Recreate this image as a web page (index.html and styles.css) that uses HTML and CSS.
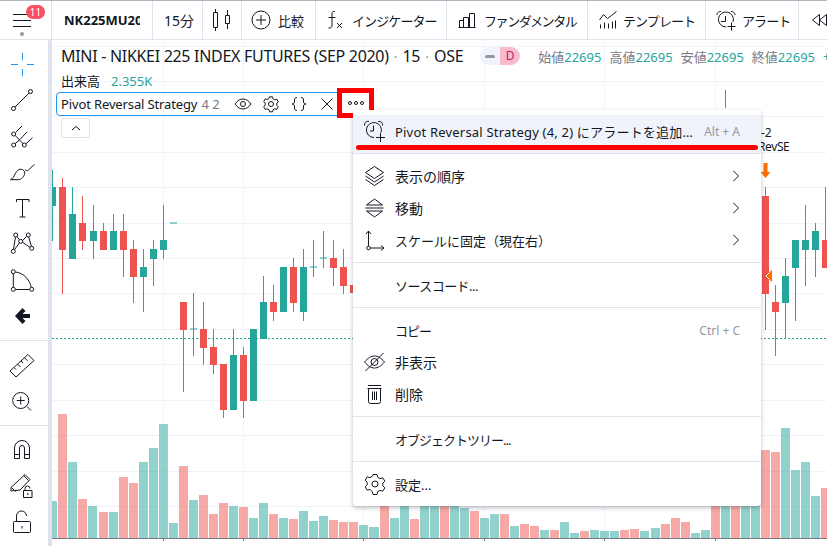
FILE: index.html
```html
<!DOCTYPE html>
<html lang="ja">
<head>
    <meta charset="UTF-8">
    <title>NK225MU2020 - Chart</title>
    <link rel="stylesheet" href="styles.css">
</head>
<body>
    <div class="app">
        <!-- Top toolbar -->
        <header class="topbar">
            <div class="cell cell-menu">
                <svg class="ico" width="28" height="28" viewBox="0 0 28 28"><path d="M5 8.500h14M5 14.500h18M5 20.500h18"/></svg>
                <span class="menu-dot"></span>
                <span class="badge">11</span>
            </div>
            <div class="cell cell-symbol"><span class="symbol">NK225MU2020</span></div>
            <div class="cell cell-interval">15分</div>
            <div class="cell cell-style">
                <svg class="ico" width="28" height="28" viewBox="0 0 28 28"><path d="M7.500 3v3M7.500 22v3M5.500 6.500h4v15h-4zM19.500 4v5M19.500 18v5M17.500 9.500h4v8h-4z"/></svg>
            </div>
            <div class="cell cell-compare">
                <svg class="ico" width="20" height="20" viewBox="0 0 20 20"><circle cx="10" cy="10" r="9"/><path d="M10 5v10M5 10h10"/></svg>
                <span>比較</span>
            </div>
            <div class="cell cell-indicator">
                <svg class="ico" width="18" height="20" viewBox="0 0 18 20"><path d="M9 1.500c-2-.5-3 .5-3 2.500v11c0 2-1 3.500-3.500 3M2.500 7.500h7M11 13l5 5M16 13l-5 5"/></svg>
                <span class="kana">インジケーター</span>
            </div>
            <div class="cell cell-fund">
                <svg class="ico" width="18" height="16" viewBox="0 0 18 16"><path d="M.5 15.500h17M1.500 15.500v-7h4v7M5.500 15.500v-10h5v10M11.500 15.500V1.500h5v14"/></svg>
                <span class="kana kana-fund">ファンダメンタル</span>
            </div>
            <div class="cell cell-template">
                <svg class="ico" width="18" height="18" viewBox="0 0 18 18"><path d="M.5 9l4-5.500 4 4 4-3 5-4M1.500 17.500v-4M5.500 17.500v-6M9.500 17.500v-5M13.500 17.500v-7M16.500 17.500v-8"/></svg>
                <span class="kana">テンプレート</span>
            </div>
            <div class="cell cell-alert">
                <svg class="ico" width="20" height="21" viewBox="0 0 20 21"><path d="M10 17a7.500 7.500 0 1 1 7-5M9.500 6v5.500H5M1 5a3.500 3.500 0 0 1 4-3.500M19 5a3.500 3.500 0 0 0-4-3.500M15.500 12.500v8M11.500 16.500h8"/></svg>
                <span class="kana">アラート</span>
            </div>
            <div class="cell cell-replay">
                <svg class="ico" width="28" height="12" viewBox="0 0 28 12"><path d="M7.500 .5L.5 6l7 5.500zM14.500 .5L7.500 6l7 5.500zM21.500 .5L14.500 6l7 5.500z"/></svg>
            </div>
        </header>

        <div class="main">
            <!-- Drawing tools -->
            <aside class="sidebar">
                <div class="tool-group">
                    <div class="tool"><svg class="ico ico-active" width="28" height="28" viewBox="0 0 28 28"><path d="M3 14.500h7M19 14.500h7M14.500 3v7M14.500 19v7"/></svg></div>
                    <div class="tool"><svg class="ico" width="28" height="28" viewBox="0 0 28 28"><circle cx="5.500" cy="22.500" r="2"/><circle cx="22.500" cy="5.500" r="2"/><path d="M7 21L21 7"/></svg></div>
                    <div class="tool"><svg class="ico" width="28" height="28" viewBox="0 0 28 28"><circle cx="5.700" cy="12" r="2"/><circle cx="5.700" cy="23" r="2"/><circle cx="16.300" cy="23" r="2"/><path d="M7.200 13.500l7.700 8M7.200 21.700l5-4.500 7-7.500M8 10l6-6M18 21.700l6.500-6"/></svg></div>
                    <div class="tool"><svg class="ico" width="28" height="28" viewBox="0 0 28 28"><path d="M2.500 21.700c2.500-1 3.500-3.500 5-6.500 1.500-2.500 3-4.200 5.500-4 2.500.3 4 2 3.700 4-.5 3.500-3.200 6.500-6.700 6.500zM17.500 11.500c0 1.500 2 1.500 3 .5l6-5.700"/></svg></div>
                    <div class="tool"><svg class="ico" width="28" height="28" viewBox="0 0 28 28"><path d="M8.500 8V5.500h12.500V8M14.500 5.500v17.500M11.500 23h6"/></svg></div>
                    <div class="tool"><svg class="ico" width="28" height="28" viewBox="0 0 28 28"><circle cx="7.700" cy="5" r="2"/><circle cx="20.300" cy="5" r="2"/><circle cx="12.700" cy="11.300" r="2"/><circle cx="5.300" cy="21.300" r="2"/><circle cx="23.700" cy="18.300" r="2"/><path d="M5.500 19.300L7.500 7M9 6.600l2.500 3.200M11.400 12.800L6.500 19.700M14.600 10.600L18.700 6.200M20.700 7l2.700 9.300M14.500 12.200l7.400 5.200"/></svg></div>
                    <div class="tool"><svg class="ico" width="28" height="28" viewBox="0 0 28 28"><circle cx="5.300" cy="5.700" r="2"/><circle cx="5.300" cy="23.300" r="2"/><circle cx="23.700" cy="23.300" r="2"/><path d="M5.300 7.700v13.600M7.300 23.500h14.400M7.300 6c8 .8 14 7 16 15.300"/></svg></div>
                    <div class="tool"><svg class="ico-fill" width="28" height="28" viewBox="0 0 28 28"><path d="M14.500 6L7 14l7.500 8 3-3-3-3H22v-4h-7.500l3-3z"/></svg></div>
                </div>
                <div class="tool-group">
                    <div class="tool"><svg class="ico" width="28" height="28" viewBox="0 0 28 28"><path d="M2 20L20 3.500l6 6L8 26zM6 16.500l2 2M9.500 13l3 3M13 10l2 2M16.500 6.800l3 3"/></svg></div>
                    <div class="tool"><svg class="ico" width="28" height="28" viewBox="0 0 28 28"><circle cx="12.700" cy="13.500" r="8"/><path d="M12.700 9.500v8M8.700 13.500h8M19 19.500l4 4"/></svg></div>
                </div>
                <div class="tool-group">
                    <div class="tool"><svg class="ico" width="28" height="28" viewBox="0 0 28 28"><path d="M6.500 22.500V12a7.500 7.500 0 0 1 15 0v10.500h-5V12a2.500 2.500 0 0 0-5 0v10.500zM6.500 18.500h5M16.500 18.500h5"/></svg></div>
                    <div class="tool"><svg class="ico" width="28" height="28" viewBox="0 0 28 28"><path d="M3 15.500L17 2.500l5 5-10 10.500-9 1zM3.500 15.500l4 4M16 4l4.500 4.500M15.500 25.500h8.500v-7h-8.500zM17 18.500v-2a2.500 2.500 0 0 1 5 0M19.800 21v2"/></svg></div>
                    <div class="tool"><svg class="ico" width="28" height="28" viewBox="0 0 28 28"><path d="M6.500 13.500h15a1 1 0 0 1 1 1v9a1 1 0 0 1-1 1h-15a1 1 0 0 1-1-1v-9a1 1 0 0 1 1-1zM8.500 13V8a5 5 0 0 1 10 0M14 18v2.500"/></svg></div>
                </div>
            </aside>

            <!-- Chart area. The svg uses page coordinates -->
            <div class="chart">
                <svg class="plot" width="775" height="506" viewBox="52 40 775 506">
                    <path class="grid" d="M52 46.500H827M52 81.500H827M52 116.500H827M52 152.500H827M52 187.500H827M52 223.500H827M52 258.500H827M52 293.500H827M52 329.500H827M52 364.500H827M52 400.500H827M52 435.500H827M52 471.500H827M52 506.500H827M163.500 40V538M243.500 40V538M363.500 40V538M484.500 40V538M604.500 40V538M715.500 40V538"/>
                    <path class="vol-up" d="M52 501h5V538h-5zM68 462h9V538h-9zM88 506h9V538h-9zM109 512h9V538h-9zM139 462h9V538h-9zM149 448h9V538h-9zM159 424h9V538h-9zM169 523h9V538h-9zM189 500h9V538h-9zM229 506h9V538h-9zM249 518h9V538h-9zM259 503h9V538h-9zM279 518h9V538h-9zM299 511h9V538h-9zM309 521h9V538h-9zM319 516h9V538h-9zM359 525h9V538h-9zM369 527h10V538h-10zM390 518h9V538h-9zM400 490h9V538h-9zM420 490h9V538h-9zM430 490h9V538h-9zM450 490h9V538h-9zM460 508h9V538h-9zM480 518h9V538h-9zM490 514h9V538h-9zM510 526h9V538h-9zM540 530h9V538h-9zM560 522h9V538h-9zM570 533h9V538h-9zM590 530h9V538h-9zM600 531h9V538h-9zM610 531h9V538h-9zM640 531h9V538h-9zM651 528h9V538h-9zM691 533h9V538h-9zM701 530h9V538h-9zM721 490h9V538h-9zM741 490h9V538h-9zM751 490h9V538h-9zM781 428h9V538h-9zM791 470h9V538h-9zM801 462h9V538h-9zM811 496h9V538h-9z"/>
                    <path class="vol-down" d="M58 414h9V538h-9zM78 499h9V538h-9zM99 512h9V538h-9zM119 477h9V538h-9zM129 483h9V538h-9zM179 466h9V538h-9zM199 495h9V538h-9zM209 514h9V538h-9zM219 503h9V538h-9zM239 507h9V538h-9zM269 514h9V538h-9zM289 519h9V538h-9zM329 520h9V538h-9zM339 522h9V538h-9zM349 522h9V538h-9zM380 490h9V538h-9zM410 519h9V538h-9zM440 490h9V538h-9zM470 511h9V538h-9zM500 514h9V538h-9zM520 524h9V538h-9zM530 526h9V538h-9zM550 530h9V538h-9zM580 531h9V538h-9zM620 530h9V538h-9zM630 529h9V538h-9zM661 524h9V538h-9zM671 518h9V538h-9zM681 522h9V538h-9zM711 490h9V538h-9zM731 490h9V538h-9zM761 450h9V538h-9zM771 452h9V538h-9zM821 488h6V538h-6z"/>
                    <path class="axis" d="M52 538.500H827M163.500 538v3M243.500 538v3M363.500 538v3M484.500 538v3M604.500 538v3M715.500 538v3"/>
                    <path class="last-price" d="M52 338.500H827"/>
                    <path class="wick-up" d="M52.500 170V241M72.500 187V259M93.500 205V259M113.500 214V250M143.500 249V312M153.500 240V286M163.500 205V259M193.500 293V356M233.500 329V355M263.500 276V339M303.500 249V321M313.500 240V277M323.500 231V268M785.500 258V338M795.500 240V321M805.500 205V286M815.500 223V277M725.500 90V108"/>
                    <path class="wick-down" d="M62.500 178V294M82.500 196V250M103.500 223V250M123.500 214V277M133.500 240V303M183.500 330V392M203.500 302V365M213.500 329V374M223.500 364V418M243.500 347V418M273.500 285V321M293.500 258V312M333.500 240V286M343.500 249V294M765.500 187V330M775.500 285V356M825.500 187V240"/>
                    <path class="body-up" d="M52 187h4v19h-4zM69 214h7v45h-7zM90 231h7v10h-7zM110 231h7v19h-7zM140 267h7v10h-7zM150 249h7v10h-7zM160 240h7v10h-7zM170 222.500h7v1h-7zM190 328.500h7v1h-7zM230 355h7v55h-7zM250 329h7v72h-7zM260 302h7v37h-7zM280 267h7v45h-7zM300 267h7v45h-7zM310 266.500h7v1h-7zM320 257.500h7v1h-7zM782 276h7v27h-7zM792 240h7v28h-7zM802 240h7v10h-7zM812 231h7v19h-7z"/>
                    <path class="body-down" d="M59 187h7v63h-7zM79 223h7v18h-7zM100 231h7v19h-7zM120 231h7v19h-7zM130 249h7v28h-7zM180 302h7v28h-7zM200 329h7v19h-7zM210 347h7v18h-7zM220 364h7v46h-7zM240 355h7v46h-7zM270 302h7v10h-7zM290 267h7v36h-7zM330 258h7v10h-7zM340 267h7v19h-7zM350 285h7v8h-7zM762 196h7v98h-7zM772 302h7v10h-7zM822 240h5v28h-5z"/>
                    <path class="marker" d="M763.500 163h4v9h3l-5 6-5-6h3z"/>
                    <path class="marker" d="M772 270v12l-7-6z"/>
                    <path class="marker-inner" d="M769.500 272.500L766 276l3.500 3.500"/>
                    <text class="signal" x="761" y="137">-2</text>
                    <text class="signal signal-tight" x="758" y="151">RevSE</text>
                </svg>

                <div class="legend">
                    <div class="legend-title">
                        <span class="title-main">MINI - NIKKEI 225 INDEX FUTURES (SEP 2020)</span>
                        <span class="title-dot">·</span>
                        <span class="title-main">15</span>
                        <span class="title-dot">·</span>
                        <span class="title-main">OSE</span>
                        <span class="pill"><span class="pill-grey"><i></i></span><span class="pill-pink">D</span></span>
                        <span class="ohlc">
                            <span class="ohlc-item">始値<b>22695</b></span>
                            <span class="ohlc-item">高値<b>22695</b></span>
                            <span class="ohlc-item">安値<b>22695</b></span>
                            <span class="ohlc-item">終値<b>22695</b></span>
                            <b>+1</b>
                        </span>
                    </div>
                    <div class="legend-vol">出来高<b>2.355K</b></div>
                    <div class="study">
                        <span class="study-name">Pivot Reversal Strategy</span>
                        <span class="study-args">4 2</span>
                        <span class="study-sep"></span>
                        <svg class="ico study-ico" width="18" height="18" viewBox="0 0 18 18"><path d="M1 9c2.500-3.500 5-5 8-5s5.500 1.500 8 5c-2.500 3.500-5 5-8 5s-5.500-1.500-8-5z"/><circle cx="9" cy="9" r="2.500"/></svg>
                        <svg class="ico study-ico" width="18" height="18" viewBox="0 0 18 18"><circle cx="9" cy="9" r="2.500"/><path d="M7.500 1.800h3l.5 2 1.800 1 2-.6 1.400 2.600-1.400 1.500v2l1.400 1.500-1.400 2.600-2-.6-1.800 1-.5 2h-3l-.5-2-1.800-1-2 .6-1.400-2.600L3.200 10V8L1.800 6.500l1.400-2.600 2 .6 1.800-1z"/></svg>
                        <svg class="ico study-ico" width="18" height="18" viewBox="0 0 18 18"><path d="M7 2.500c-2 0-2.500 1-2.500 2.500v2c0 1-.7 2-2.500 2 1.800 0 2.500 1 2.500 2v2c0 1.500.5 2.500 2.500 2.500M11 2.500c2 0 2.500 1 2.500 2.500v2c0 1 .7 2 2.500 2-1.800 0-2.500 1-2.500 2v2c0 1.500-.5 2.500-2.500 2.500"/></svg>
                        <svg class="ico study-ico" width="18" height="18" viewBox="0 0 18 18"><path d="M3.500 3.500l11 11M14.500 3.500l-11 11"/></svg>
                    </div>
                    <div class="collapse">
                        <svg class="ico" width="10" height="6" viewBox="0 0 10 6"><path d="M1 5l4-3.500L9 5"/></svg>
                    </div>
                </div>

                <!-- Red marks drawn over the screenshot -->
                <div class="mark-box"><span></span><span></span><span></span></div>

                <div class="context-menu">
                    <div class="menu-section menu-section-first">
                        <div class="menu-item menu-item-active">
                            <svg class="ico menu-ico" width="24" height="24" viewBox="0 0 24 24"><path d="M11 18.500a7.500 7.500 0 1 1 7-5M10.500 6.500V12H7M1.500 6.500A3.500 3.500 0 0 1 6 2.500M19.500 6.500A3.500 3.500 0 0 0 15 2.500M17.500 14v9M13 18.500h9"/></svg>
                            <span class="menu-label label-alert">Pivot Reversal Strategy (4, 2) にアラートを追加…</span>
                            <span class="menu-hint">Alt + A</span>
                        </div>
                    </div>
                    <div class="menu-section">
                        <div class="menu-item">
                            <svg class="ico menu-ico" width="24" height="24" viewBox="0 0 24 24"><path d="M11.500 2.500l9 6-9 6-9-6zM2.500 12l9 6 9-6M2.500 15.500l9 6 9-6"/></svg>
                            <span class="menu-label label-wide">表示の順序</span>
                            <svg class="ico menu-arrow" width="8" height="12" viewBox="0 0 8 12"><path d="M1.500 1l5 5-5 5"/></svg>
                        </div>
                        <div class="menu-item">
                            <svg class="ico menu-ico" width="24" height="24" viewBox="0 0 24 24"><path d="M3.500 9l8-6 8 6zM3.500 15l8 6 8-6zM2.500 12h18"/></svg>
                            <span class="menu-label label-wide">移動</span>
                            <svg class="ico menu-arrow" width="8" height="12" viewBox="0 0 8 12"><path d="M1.500 1l5 5-5 5"/></svg>
                        </div>
                        <div class="menu-item">
                            <svg class="ico menu-ico" width="24" height="24" viewBox="0 0 24 24"><circle cx="5.500" cy="20" r="1.800"/><path d="M5.500 18V3M3 6l2.500-3L8 6M7.300 20H21M18 17.500l3 2.500-3 2.500"/></svg>
                            <span class="menu-label">スケールに固定（現在右）</span>
                            <svg class="ico menu-arrow" width="8" height="12" viewBox="0 0 8 12"><path d="M1.500 1l5 5-5 5"/></svg>
                        </div>
                    </div>
                    <div class="menu-section">
                        <div class="menu-item"><span class="menu-ico"></span><span class="menu-label label-source">ソースコード...</span></div>
                    </div>
                    <div class="menu-section">
                        <div class="menu-item">
                            <span class="menu-ico"></span>
                            <span class="menu-label label-tight">コピー</span>
                            <span class="menu-hint">Ctrl + C</span>
                        </div>
                        <div class="menu-item">
                            <svg class="ico menu-ico" width="24" height="24" viewBox="0 0 24 24"><path d="M1.500 12c3.500-4 6.500-6 10-6s6.500 2 10 6c-3.500 4-6.500 6-10 6s-6.500-2-10-6z"/><circle cx="11.500" cy="12" r="3.500"/><path d="M2.500 21L20.500 3"/></svg>
                            <span class="menu-label label-wide">非表示</span>
                        </div>
                        <div class="menu-item">
                            <svg class="ico menu-ico" width="24" height="24" viewBox="0 0 24 24"><path d="M5 3.500h13M4.500 6.500h14M5.500 6.500v13a2 2 0 0 0 2 2h8a2 2 0 0 0 2-2v-13M9.500 9.500v8.500M11.500 9.500v8.500M13.500 9.500v8.500"/></svg>
                            <span class="menu-label label-wide">削除</span>
                        </div>
                    </div>
                    <div class="menu-section">
                        <div class="menu-item"><span class="menu-ico"></span><span class="menu-label label-tight">オブジェクトツリー...</span></div>
                    </div>
                    <div class="menu-section">
                        <div class="menu-item">
                            <svg class="ico menu-ico" width="24" height="24" viewBox="0 0 24 24"><circle cx="12" cy="12" r="3"/><path d="M10 2.500h4l.7 2.800 2.300 1.300 2.800-.8 2 3.400-2 2v2.600l2 2-2 3.400-2.800-.8-2.300 1.300-.7 2.800h-4l-.7-2.800L7 17.400l-2.800.8-2-3.400 2-2v-2.600l-2-2 2-3.400 2.800.8 2.300-1.300z"/></svg>
                            <span class="menu-label">設定...</span>
                        </div>
                    </div>
                </div>
                <div class="mark-line"></div>
            </div>
        </div>
    </div>
</body>
</html>
```

FILE: styles.css
```css
* {
    box-sizing: border-box;
}
html, body {
    margin: 0;
    padding: 0;
    background: #fff;
}
body {
    font-family: "Noto Sans", "Noto Sans CJK JP", sans-serif;
    color: #131722;
}
.app {
    width: 827px;
    height: 546px;
    overflow: hidden;
    display: flex;
    flex-direction: column;
}
.ico {
    display: block;
    fill: none;
    stroke: #131722;
    stroke-width: 1;
    flex: none;
}
.ico-active {
    stroke: #2196f3;
}
.ico-fill {
    display: block;
    fill: #131722;
}

/* top bar */
.topbar {
    display: flex;
    height: 40px;
    flex: none;
    border-top: 1px solid #b2b5be;
    border-bottom: 1px solid #e0e3eb;
    font-size: 13px;
}
.cell {
    display: flex;
    align-items: center;
    flex: none;
    border-right: 1px solid #e0e3eb;
    position: relative;
    height: 38px;
    white-space: nowrap;
}
.cell-menu { width: 52px; padding-left: 8px; }
.cell-symbol { width: 101px; padding-left: 12px; }
.cell-interval { width: 50px; padding-left: 11px; font-size: 14px; }
.cell-style { width: 39px; padding-left: 5px; }
.cell-compare { width: 74px; padding-left: 9px; gap: 7px; }
.cell-indicator { width: 131px; padding-left: 10px; gap: 8px; }
.cell-fund { width: 141px; padding-left: 11px; gap: 8px; }
.cell-template { width: 118px; padding-left: 11px; gap: 6px; }
.cell-alert { width: 93px; padding-left: 10px; gap: 6px; }
.cell-replay { border-right: 0; padding-left: 13px; }
.kana {
    letter-spacing: -0.9px;
}
.kana-fund {
    letter-spacing: -1.4px;
}
.symbol {
    display: block;
    width: 76px;
    overflow: hidden;
    white-space: nowrap;
    font-weight: 700;
    font-size: 13px;
}
.menu-dot {
    position: absolute;
    left: 20px;
    top: 31px;
    width: 4px;
    height: 4px;
    border-radius: 50%;
    background: #9598a1;
}
.badge {
    position: absolute;
    left: 26px;
    top: 4px;
    width: 19px;
    height: 14px;
    border-radius: 7px;
    background: #f7525f;
    color: #fff;
    font-size: 10px;
    line-height: 14px;
    text-align: center;
}

/* main row */
.main {
    display: flex;
    flex: 1;
    min-height: 0;
}
.sidebar {
    width: 52px;
    flex: none;
    border-right: 4px solid #e0e3eb;
}
.tool-group {
    padding: 6px 0;
    border-bottom: 1px solid #e0e3eb;
}
.tool-group:last-child {
    border-bottom: 0;
}
.tool {
    height: 36px;
    display: flex;
    align-items: center;
    padding-left: 8px;
}

/* chart */
.chart {
    position: relative;
    flex: 1;
    overflow: hidden;
}
.plot {
    position: absolute;
    left: 0;
    top: 0;
    display: block;
}
.grid {
    fill: none;
    stroke: #f0f3fa;
}
.axis {
    fill: none;
    stroke: #787b86;
}
.vol-up {
    fill: rgba(38, 166, 154, 0.5);
}
.vol-down {
    fill: rgba(239, 83, 80, 0.5);
}
.last-price {
    fill: none;
    stroke: #26a69a;
    stroke-dasharray: 2 2;
}
.wick-up { stroke: #26a69a; fill: none; }
.wick-down { stroke: #ef5350; fill: none; }
.body-up { fill: #26a69a; }
.body-down { fill: #ef5350; }
.marker { fill: #ff6d00; }
.marker-inner { fill: none; stroke: #fff; }
.signal {
    font-size: 12px;
    fill: #131722;
}
.signal-tight {
    letter-spacing: -0.4px;
}

/* legend */
.legend {
    position: absolute;
    left: 4px;
    top: 0;
}
.legend-title {
    display: flex;
    align-items: center;
    height: 32px;
    padding-left: 5px;
    white-space: nowrap;
    width: 771px;
    overflow: hidden;
}
.title-main {
    font-size: 16px;
    letter-spacing: -0.3px;
}
.title-dot {
    color: #9598a1;
    margin: 0 5px;
    font-size: 14px;
}
.pill {
    display: flex;
    height: 18px;
    margin-left: 17px;
    border-radius: 9px;
    overflow: hidden;
    font-size: 12px;
    line-height: 18px;
    flex: none;
}
.pill-grey {
    width: 20px;
    background: #f0f3fa;
    display: flex;
    align-items: center;
    justify-content: center;
}
.pill-grey i {
    display: block;
    width: 10px;
    height: 3px;
    border-radius: 2px;
    background: #9598a1;
}
.pill-pink {
    width: 20px;
    background: #f8bbd0;
    color: #c2185b;
    text-align: center;
}
.ohlc {
    display: flex;
    gap: 8px;
    margin-left: 18px;
    font-size: 13px;
    color: #787b86;
}
.ohlc b, .legend-vol b {
    font-weight: 400;
    color: #26a69a;
}
.legend-vol {
    height: 18px;
    padding-left: 5px;
    font-size: 13px;
    line-height: 18px;
}
.legend-vol b {
    margin-left: 11px;
}
.study {
    display: flex;
    align-items: center;
    width: 290px;
    height: 24px;
    margin-top: 2px;
    padding-left: 4px;
    border: 1px solid #2196f3;
    border-radius: 4px;
    font-size: 13px;
    white-space: nowrap;
}
.study-name {
    letter-spacing: -0.13px;
}
.study-args {
    color: #787b86;
    margin-left: 4px;
}
.study-sep {
    width: 1px;
    height: 13px;
    background: #e0e3eb;
    margin: 0 7px;
}
.study-ico {
    margin-right: 10px;
}
.collapse {
    display: flex;
    align-items: center;
    justify-content: center;
    width: 29px;
    height: 20px;
    margin: 2px 0 0 5px;
    border: 1px solid #e0e3eb;
    border-radius: 3px;
}
.mark-box {
    position: absolute;
    left: 285px;
    top: 48px;
    width: 37px;
    height: 30px;
    border: 5px solid #f00;
    background: #fff;
    display: flex;
    align-items: center;
    justify-content: center;
    gap: 2px;
}
.mark-box span {
    width: 4px;
    height: 4px;
    border: 1px solid #131722;
    border-radius: 50%;
}

/* context menu */
.context-menu {
    position: absolute;
    left: 301px;
    top: 70px;
    width: 408px;
    background: #fff;
    border-radius: 4px;
    box-shadow: 0 2px 4px rgba(42, 46, 57, 0.3);
    font-size: 13px;
}
.menu-section {
    padding: 6px 0;
    border-top: 1px solid #e0e3eb;
}
.menu-section-first {
    padding: 5px 0 0;
    border-top: 0;
}
.menu-item {
    display: flex;
    align-items: center;
    height: 32px;
    padding: 0 21px 0 10px;
}
.menu-item-active {
    height: 38px;
    padding-bottom: 6px;
    background: #f0f3fa;
}
.menu-ico {
    width: 24px;
    height: 24px;
    margin-right: 8px;
    flex: none;
}
.menu-label {
    flex: 1;
    white-space: nowrap;
}
.label-wide {
    font-size: 14px;
}
.label-alert {
    letter-spacing: 0.2px;
}
.label-source {
    letter-spacing: -0.55px;
}
.label-tight {
    letter-spacing: -1px;
}
.menu-hint {
    color: #9598a1;
    font-size: 12px;
    white-space: nowrap;
}
.mark-line {
    position: absolute;
    left: 304px;
    top: 105px;
    width: 402px;
    height: 5px;
    border-radius: 3px;
    background: #f00;
}
```
